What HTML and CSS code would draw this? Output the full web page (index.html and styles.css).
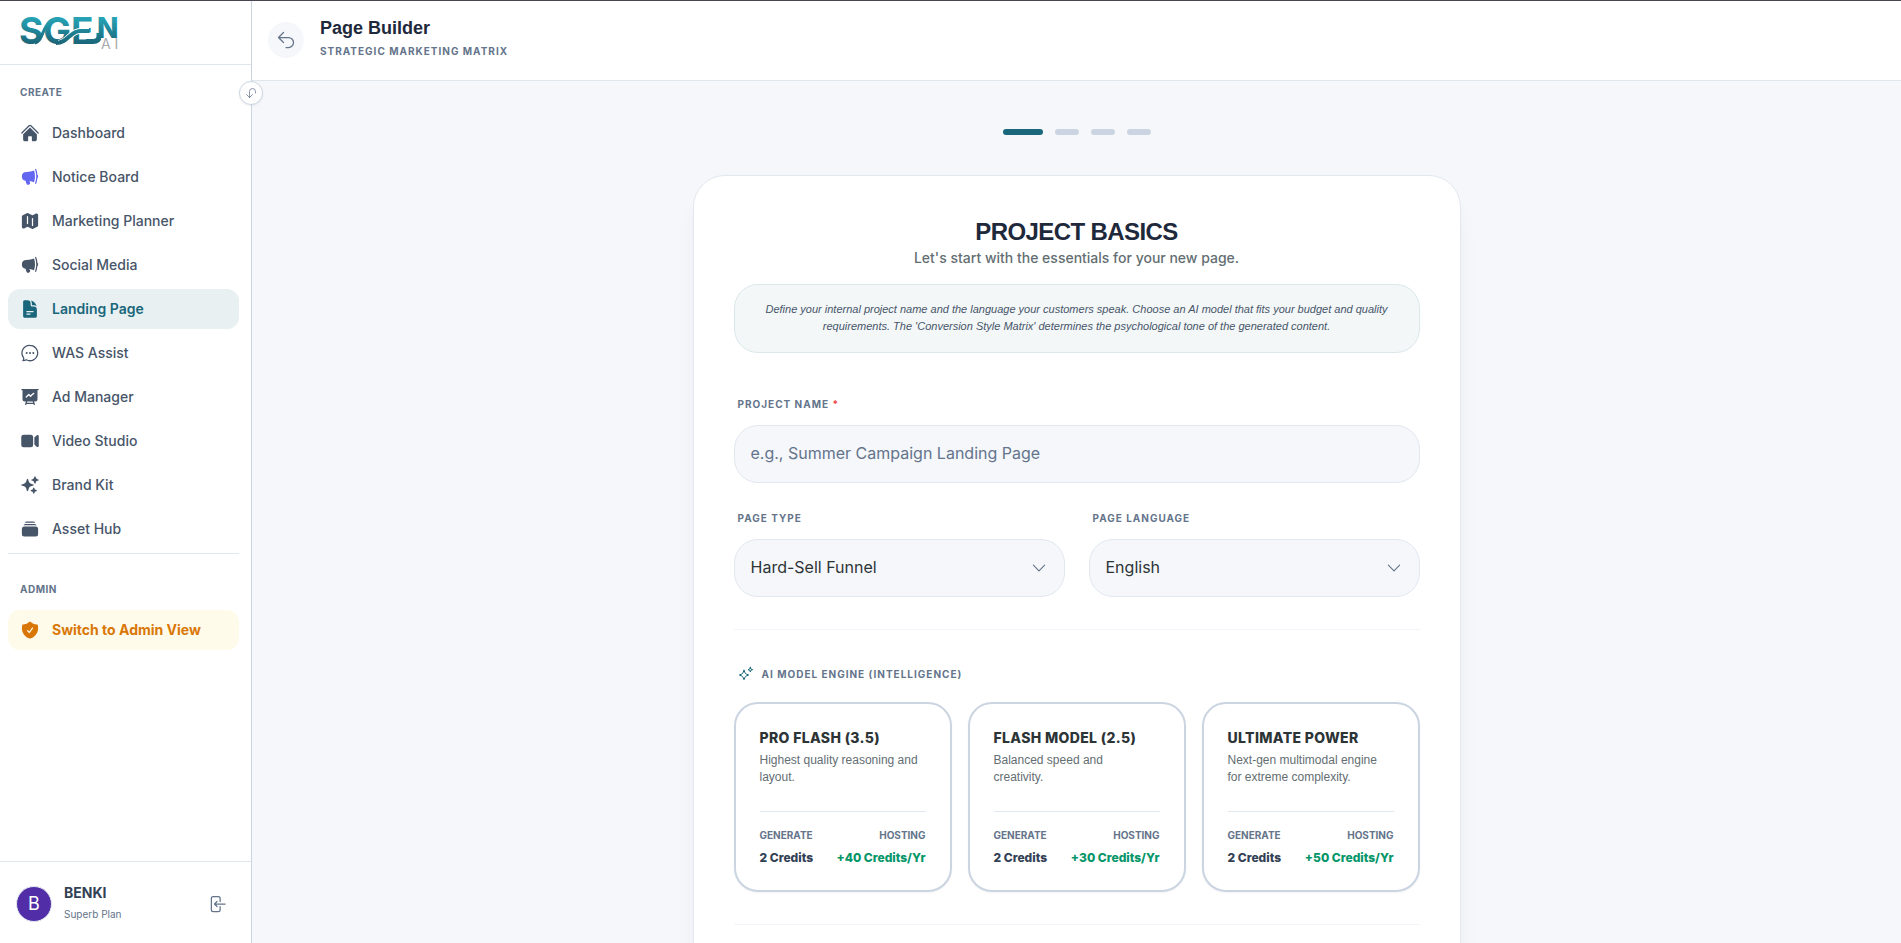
FILE: index.html
```html
<!DOCTYPE html>
<html lang="en">
<head>
<meta charset="utf-8">
<title>Page Builder</title>
<link rel="stylesheet" href="styles.css">
</head>
<body>
<div class="app">
  <aside class="sidebar">
    <a class="brand" href="#" aria-label="SGEN AI">
      <svg class="brand-logo" viewBox="0 0 104 34" aria-hidden="true">
        <defs>
          <linearGradient id="teal" gradientUnits="userSpaceOnUse" x1="0" y1="2" x2="0" y2="28">
            <stop offset="0" stop-color="#26a3b5"/>
            <stop offset="1" stop-color="#1b6478"/>
          </linearGradient>
        </defs>
        <text class="logo-main" x="-1" y="28" fill="url(#teal)">SGE<tspan class="logo-tail" x="77" y="22">N</tspan><tspan class="logo-sub" x="81" y="33">A I</tspan></text>
        <path d="M15 27C24 24 22 9 32 4" fill="none" stroke="url(#teal)" stroke-width="3"/>
        <path d="M38 27C48 27 50 15 60 14.900H69" fill="none" stroke="#fff" stroke-width="6"/>
        <path d="M36 27C48 27 50 15 60 14.900H69" fill="none" stroke="url(#teal)" stroke-width="4"/>
        <path d="M66 25.500H73Q79 25.500 79 20V17" fill="none" stroke="url(#teal)" stroke-width="5"/>
      </svg>
    </a>

    <nav class="nav">
      <h2 class="nav-title">CREATE</h2>
      <a class="nav-item" href="#"><svg class="icon" viewBox="0 0 24 24"><path d="M11.47 3.841a.75.75 0 0 1 1.06 0l8.69 8.69a.75.75 0 1 0 1.06-1.061l-8.689-8.69a2.25 2.25 0 0 0-3.182 0l-8.69 8.69a.75.75 0 1 0 1.061 1.06l8.69-8.689Z"/><path d="m12 5.432 8.159 8.159c.03.03.06.058.091.086v6.198c0 1.035-.84 1.875-1.875 1.875H15a.75.75 0 0 1-.75-.75v-4.5a.75.75 0 0 0-.75-.75h-3a.75.75 0 0 0-.75.75V21a.75.75 0 0 1-.75.75H5.625a1.875 1.875 0 0 1-1.875-1.875v-6.198a2.29 2.29 0 0 0 .091-.086L12 5.432Z"/></svg>Dashboard</a>
      <a class="nav-item nav-item-notice" href="#"><svg class="icon" viewBox="0 0 24 24"><path d="M16.881 4.345A23.112 23.112 0 0 1 8.25 6H7.5a5.25 5.25 0 0 0-.88 10.427 21.593 21.593 0 0 0 1.378 3.94c.464 1.004 1.674 1.32 2.582.796l.657-.379c.88-.508 1.165-1.593.772-2.468a17.116 17.116 0 0 1-.628-1.607c1.918.258 3.76.75 5.5 1.446A21.727 21.727 0 0 0 18 11.25c0-2.414-.393-4.735-1.119-6.905ZM18.26 3.74a23.22 23.22 0 0 1 1.24 7.51 23.22 23.22 0 0 1-1.41 7.992.75.75 0 1 0 1.409.516 24.555 24.555 0 0 0 1.415-6.43 2.992 2.992 0 0 0 .836-2.078c0-.807-.319-1.54-.836-2.078a24.65 24.65 0 0 0-1.415-6.43.75.75 0 1 0-1.409.516c.059.16.116.321.17.483Z"/></svg>Notice Board</a>
      <a class="nav-item" href="#"><svg class="icon" viewBox="0 0 24 24"><path fill-rule="evenodd" d="M8.161 2.58a1.875 1.875 0 0 1 1.678 0l4.993 2.498c.106.052.23.052.336 0l3.869-1.935A1.875 1.875 0 0 1 21.75 4.82v12.485c0 .71-.401 1.36-1.037 1.677l-4.875 2.437a1.875 1.875 0 0 1-1.676 0l-4.994-2.497a.375.375 0 0 0-.336 0l-3.868 1.935A1.875 1.875 0 0 1 2.25 19.18V6.695c0-.71.401-1.36 1.036-1.677l4.875-2.437ZM9 6a.75.75 0 0 1 .75.75V15a.75.75 0 0 1-1.5 0V6.75A.75.75 0 0 1 9 6Zm6.75 3a.75.75 0 0 0-1.5 0v8.25a.75.75 0 0 0 1.5 0V9Z"/></svg>Marketing Planner</a>
      <a class="nav-item" href="#"><svg class="icon" viewBox="0 0 24 24"><path d="M16.881 4.345A23.112 23.112 0 0 1 8.25 6H7.5a5.25 5.25 0 0 0-.88 10.427 21.593 21.593 0 0 0 1.378 3.94c.464 1.004 1.674 1.32 2.582.796l.657-.379c.88-.508 1.165-1.593.772-2.468a17.116 17.116 0 0 1-.628-1.607c1.918.258 3.76.75 5.5 1.446A21.727 21.727 0 0 0 18 11.25c0-2.414-.393-4.735-1.119-6.905ZM18.26 3.74a23.22 23.22 0 0 1 1.24 7.51 23.22 23.22 0 0 1-1.41 7.992.75.75 0 1 0 1.409.516 24.555 24.555 0 0 0 1.415-6.43 2.992 2.992 0 0 0 .836-2.078c0-.807-.319-1.54-.836-2.078a24.65 24.65 0 0 0-1.415-6.43.75.75 0 1 0-1.409.516c.059.16.116.321.17.483Z"/></svg>Social Media</a>
      <a class="nav-item nav-item-active" href="#" aria-current="page"><svg class="icon" viewBox="0 0 24 24"><path fill-rule="evenodd" d="M5.625 1.5c-1.036 0-1.875.84-1.875 1.875v17.25c0 1.035.84 1.875 1.875 1.875h12.75c1.035 0 1.875-.84 1.875-1.875V12.75A3.75 3.75 0 0 0 16.5 9h-1.875a1.875 1.875 0 0 1-1.875-1.875V5.25A3.75 3.75 0 0 0 9 1.5H5.625ZM7.5 15a.75.75 0 0 1 .75-.75h7.5a.75.75 0 0 1 0 1.5h-7.5A.75.75 0 0 1 7.5 15Zm.75 2.25a.75.75 0 0 0 0 1.5H12a.75.75 0 0 0 0-1.5H8.25Z"/><path d="M12.971 1.816A5.23 5.23 0 0 1 14.25 5.25v1.875c0 .207.168.375.375.375H16.5a5.23 5.23 0 0 1 3.434 1.279 9.768 9.768 0 0 0-6.963-6.963Z"/></svg>Landing Page</a>
      <a class="nav-item" href="#"><svg class="icon icon-line" viewBox="0 0 24 24"><path d="M12 2.75a9.25 9.25 0 1 1-4.4 17.4c-1 .7-2.600 1.100-4.100 1.100.8-.9 1.100-2 .9-3.500A9.250 9.250 0 0 1 12 2.750Z"/><g fill="currentColor" stroke="none"><circle cx="8" cy="12" r="1.200"/><circle cx="12" cy="12" r="1.200"/><circle cx="16" cy="12" r="1.200"/></g></svg>WAS Assist</a>
      <a class="nav-item" href="#"><svg class="icon" viewBox="0 0 24 24"><path fill-rule="evenodd" d="M2.250 2.250a.75.75 0 0 0 0 1.500H3v10.500a3 3 0 0 0 3 3h1.210l-1.172 3.513a.75.75 0 0 0 1.424.474l.329-.987h8.418l.33.987a.75.75 0 0 0 1.422-.474l-1.170-3.513H18a3 3 0 0 0 3-3V3.750h.75a.75.75 0 0 0 0-1.500H2.250Zm6.540 15h6.420l.5 1.500H8.290l.5-1.500Zm8.085-8.995a.75.75 0 1 0-.75-1.299 12.810 12.810 0 0 0-3.558 3.050L11.030 8.470a.75.75 0 0 0-1.060 0l-3 3a.75.75 0 1 0 1.060 1.060l2.470-2.470 1.617 1.618a.75.75 0 0 0 1.146-.102 11.312 11.312 0 0 1 3.612-3.321Z"/></svg>Ad Manager</a>
      <a class="nav-item" href="#"><svg class="icon" viewBox="0 0 24 24"><path d="M4.500 4.500a3 3 0 0 0-3 3v9a3 3 0 0 0 3 3h8.250a3 3 0 0 0 3-3v-9a3 3 0 0 0-3-3H4.500ZM19.940 18.750l-2.690-2.690V7.940l2.690-2.690c.944-.945 2.560-.276 2.560 1.060v11.380c0 1.336-1.616 2.005-2.560 1.060Z"/></svg>Video Studio</a>
      <a class="nav-item" href="#"><svg class="icon" viewBox="0 0 24 24"><path d="M9 4.500a.75.75 0 0 1 .721.544l.813 2.846a3.750 3.750 0 0 0 2.576 2.576l2.846.813a.75.75 0 0 1 0 1.442l-2.846.813a3.750 3.750 0 0 0-2.576 2.576l-.813 2.846a.75.75 0 0 1-1.442 0l-.813-2.846a3.750 3.750 0 0 0-2.576-2.576l-2.846-.813a.75.75 0 0 1 0-1.442l2.846-.813A3.750 3.750 0 0 0 7.466 7.890l.813-2.846A.75.75 0 0 1 9 4.500ZM18 1.500a.75.75 0 0 1 .728.568l.258 1.036c.236.94.97 1.674 1.910 1.910l1.036.258a.75.75 0 0 1 0 1.456l-1.036.258c-.94.236-1.674.97-1.910 1.910l-.258 1.036a.75.75 0 0 1-1.456 0l-.258-1.036a2.625 2.625 0 0 0-1.910-1.910l-1.036-.258a.75.75 0 0 1 0-1.456l1.036-.258a2.625 2.625 0 0 0 1.910-1.910l.258-1.036A.75.75 0 0 1 18 1.500ZM16.500 15a.75.75 0 0 1 .712.513l.394 1.183c.15.447.5.799.948.948l1.183.395a.75.75 0 0 1 0 1.422l-1.183.395c-.447.15-.799.5-.948.948l-.395 1.183a.75.75 0 0 1-1.422 0l-.395-1.183a1.500 1.500 0 0 0-.948-.948l-1.183-.395a.75.75 0 0 1 0-1.422l1.183-.395c.447-.15.799-.5.948-.948l.395-1.183A.75.75 0 0 1 16.500 15Z"/></svg>Brand Kit</a>
      <a class="nav-item" href="#"><svg class="icon" viewBox="0 0 24 24"><path d="M5.566 4.657A4.505 4.505 0 0 1 6.750 4.500h10.500c.41 0 .806.055 1.183.157A3 3 0 0 0 15.750 3h-7.500a3 3 0 0 0-2.684 1.657ZM2.250 12a3 3 0 0 1 3-3h13.500a3 3 0 0 1 3 3v6a3 3 0 0 1-3 3H5.250a3 3 0 0 1-3-3v-6ZM5.250 7.500c-.41 0-.806.055-1.184.157A3 3 0 0 1 6.750 6h10.500a3 3 0 0 1 2.683 1.657A4.505 4.505 0 0 0 18.750 7.500H5.250Z"/></svg>Asset Hub</a>
      <div class="nav-admin">
        <h2 class="nav-title">ADMIN</h2>
        <a class="nav-item nav-item-admin" href="#"><svg class="icon" viewBox="0 0 24 24"><path fill-rule="evenodd" d="M12.516 2.170a.75.75 0 0 0-1.032 0 11.209 11.209 0 0 1-7.877 3.080.75.75 0 0 0-.722.515A12.740 12.740 0 0 0 2.250 9.750c0 5.942 4.064 10.933 9.563 12.348a.749.749 0 0 0 .374 0c5.499-1.415 9.563-6.406 9.563-12.348 0-1.390-.223-2.730-.635-3.985a.75.75 0 0 0-.722-.516l-.143.001c-2.996 0-5.717-1.170-7.734-3.080Zm3.094 8.016a.75.75 0 1 0-1.220-.872l-3.236 4.530L9.530 12.220a.75.75 0 0 0-1.060 1.060l2.250 2.250a.75.75 0 0 0 1.140-.094l3.750-5.250Z"/></svg>Switch to Admin View</a>
      </div>
    </nav>

    <div class="account">
      <span class="avatar">B</span>
      <div class="account-text">
        <strong class="account-name">BENKI</strong>
        <span class="account-plan">Superb Plan</span>
      </div>
      <button class="logout" type="button" aria-label="Log out"><svg class="icon icon-line" viewBox="0 0 24 24"><path d="M15.750 9V5.250A2.250 2.250 0 0 0 13.500 3h-6a2.250 2.250 0 0 0-2.250 2.250v13.500A2.250 2.250 0 0 0 7.500 21h6a2.250 2.250 0 0 0 2.250-2.250V15M12 9l-3 3m0 0 3 3m-3-3h12.750"/></svg></button>
    </div>

    <button class="collapse" type="button" aria-label="Collapse sidebar"><svg class="icon-small icon-line" viewBox="0 0 24 24"><path d="m15 15-6 6m0 0-6-6m6 6V9a6 6 0 0 1 12 0v3"/></svg></button>
  </aside>

  <div class="page">
    <header class="topbar">
      <button class="back" type="button" aria-label="Back"><svg class="icon icon-line" viewBox="0 0 24 24"><path d="M9 15 3 9m0 0 6-6M3 9h12a6 6 0 0 1 0 12h-3"/></svg></button>
      <div class="topbar-text">
        <h1 class="topbar-title">Page Builder</h1>
        <p class="topbar-sub">STRATEGIC MARKETING MATRIX</p>
      </div>
    </header>

    <main class="content">
      <div class="steps">
        <span class="step step-current"></span><span class="step"></span><span class="step"></span><span class="step"></span>
      </div>

      <form class="card">
        <h2 class="card-title">PROJECT BASICS</h2>
        <p class="card-sub">Let's start with the essentials for your new page.</p>
        <p class="hint">Define your internal project name and the language your customers speak. Choose an AI model that fits your budget and quality requirements. The 'Conversion Style Matrix' determines the psychological tone of the generated content.</p>

        <div class="field">
          <label class="label" for="name">PROJECT NAME <span class="required">*</span></label>
          <input class="control" id="name" type="text" placeholder="e.g., Summer Campaign Landing Page">
        </div>

        <div class="field-row">
          <div class="field">
            <label class="label" for="type">PAGE TYPE</label>
            <div class="select">
              <select class="control" id="type"><option>Hard-Sell Funnel</option></select>
              <svg class="chevron icon-line" viewBox="0 0 24 24"><path d="m19.500 8.250-7.500 7.500-7.500-7.500"/></svg>
            </div>
          </div>
          <div class="field">
            <label class="label" for="lang">PAGE LANGUAGE</label>
            <div class="select">
              <select class="control" id="lang"><option>English</option></select>
              <svg class="chevron icon-line" viewBox="0 0 24 24"><path d="m19.500 8.250-7.500 7.500-7.500-7.500"/></svg>
            </div>
          </div>
        </div>

        <section class="engine">
          <h3 class="label engine-title"><svg class="spark icon-line" viewBox="0 0 24 24"><path d="M9 6.500l1.700 4.100a2 2 0 0 0 1.200 1.200L16 13.500l-4.100 1.700a2 2 0 0 0-1.200 1.200L9 20.500l-1.700-4.100a2 2 0 0 0-1.200-1.200L2 13.500l4.100-1.700a2 2 0 0 0 1.200-1.200L9 6.500Z"/><path d="M18.500 2l.9 2.600 2.600.9-2.600.9-.9 2.600-.9-2.600L15 5.500l2.600-.9.9-2.600Z"/></svg>AI MODEL ENGINE (INTELLIGENCE)</h3>
          <div class="models">
            <button class="model" type="button">
              <span class="model-name">PRO FLASH (3.5)</span>
              <span class="model-desc">Highest quality reasoning and layout.</span>
              <span class="model-costs">
                <span class="cost"><span class="cost-label">GENERATE</span><span class="cost-value">2 Credits</span></span>
                <span class="cost cost-end"><span class="cost-label">HOSTING</span><span class="cost-value cost-green">+40 Credits/Yr</span></span>
              </span>
            </button>
            <button class="model" type="button">
              <span class="model-name">FLASH MODEL (2.5)</span>
              <span class="model-desc">Balanced speed and creativity.</span>
              <span class="model-costs">
                <span class="cost"><span class="cost-label">GENERATE</span><span class="cost-value">2 Credits</span></span>
                <span class="cost cost-end"><span class="cost-label">HOSTING</span><span class="cost-value cost-green">+30 Credits/Yr</span></span>
              </span>
            </button>
            <button class="model" type="button">
              <span class="model-name">ULTIMATE POWER</span>
              <span class="model-desc">Next-gen multimodal engine for extreme complexity.</span>
              <span class="model-costs">
                <span class="cost"><span class="cost-label">GENERATE</span><span class="cost-value">2 Credits</span></span>
                <span class="cost cost-end"><span class="cost-label">HOSTING</span><span class="cost-value cost-green">+50 Credits/Yr</span></span>
              </span>
            </button>
          </div>
        </section>
        <div class="section-end"></div>
      </form>
    </main>
  </div>
</div>
</body>
</html>
```
FILE: styles.css
```css
*, *::before, *::after { box-sizing: border-box; }
body {
  margin: 0;
  font-family: Inter, "Liberation Sans", sans-serif;
  font-size: 14px;
  line-height: 20px;
  color: #2d3436;
  background: #f5f7fb;
}
h1, h2, h3, p { margin: 0; }
a { color: inherit; text-decoration: none; }
button, input, select { font: inherit; color: inherit; }
button { border: 0; padding: 0; background: none; cursor: pointer; }

.app {
  display: flex;
  height: 100vh;
  overflow: hidden;
  border-top: 1px solid #4a4453;
}

.icon { width: 20px; height: 20px; flex: none; fill: currentColor; }
.icon-small { width: 12px; height: 12px; }
.icon-line {
  fill: none;
  stroke: currentColor;
  stroke-width: 1.5;
  stroke-linecap: round;
  stroke-linejoin: round;
}

/* Sidebar */
.sidebar {
  position: relative;
  display: flex;
  flex-direction: column;
  flex: none;
  width: 252px;
  background: #fff;
  border-right: 1px solid #cbd5e1;
}
.brand {
  display: flex;
  align-items: center;
  height: 64px;
  padding: 0 20px;
  border-bottom: 1px solid #dfe6ee;
}
.brand-logo { width: 104px; height: 34px; overflow: visible; }
.logo-main { font-size: 37px; font-weight: 700; }
.logo-tail { font-size: 28px; font-weight: 800; }
.logo-sub { font-size: 14px; font-weight: 400; fill: #a9abad; }
.nav {
  display: flex;
  flex-direction: column;
  gap: 4px;
  flex: 1;
  padding: 20px 12px 0 8px;
}
.nav-title {
  padding: 0 12px 9px;
  font-size: 10px;
  line-height: 15px;
  font-weight: 700;
  letter-spacing: 0.5px;
  color: #64748b;
}
.nav-item {
  display: flex;
  align-items: center;
  gap: 12px;
  height: 40px;
  padding: 0 12px;
  border-radius: 12px;
  font-weight: 500;
  color: #475569;
}
.nav-item-notice .icon { color: #6366f1; }
.nav-item-active { background: #e8f0f2; color: #1a677b; font-weight: 600; }
.nav-item-admin { background: #fffbeb; color: #d97706; font-weight: 700; }
.nav-admin { border-top: 1px solid #e2e8f0; padding-top: 28px; }
.nav-admin .nav-title { padding-bottom: 13px; }
.account {
  display: flex;
  align-items: center;
  gap: 12px;
  height: 82px;
  padding: 2px 24px 0 16px;
  border-top: 1px solid #dfe6ee;
}
.avatar {
  display: flex;
  align-items: center;
  justify-content: center;
  width: 36px;
  height: 36px;
  border: 1px solid #e2e8f0;
  border-radius: 50%;
  background: #512da8;
  color: #fff;
  font-size: 18px;
}
.account-text { display: flex; flex-direction: column; flex: 1; padding-bottom: 2px; }
.account-name { line-height: 22px; color: #334155; }
.account-plan { font-size: 10px; line-height: 20px; color: #64748b; }
.logout { display: flex; color: #64748b; }
.collapse {
  position: absolute;
  top: 80px;
  right: -12px;
  z-index: 1;
  display: flex;
  align-items: center;
  justify-content: center;
  width: 24px;
  height: 24px;
  border: 1px solid #cbd5e1;
  border-radius: 50%;
  background: #fff;
  color: #64748b;
  box-shadow: 0 1px 2px rgba(15, 23, 42, 0.06);
}

/* Page */
.page { display: flex; flex-direction: column; flex: 1; min-width: 0; }
.topbar {
  display: flex;
  align-items: center;
  gap: 16px;
  flex: none;
  height: 80px;
  padding: 0 16px 2px;
  background: #fff;
  border-bottom: 1px solid #dfe6ee;
}
.back {
  display: flex;
  align-items: center;
  justify-content: center;
  width: 36px;
  height: 36px;
  border-radius: 50%;
  background: #f5f7fb;
  color: #64748b;
}
.topbar-text { padding-bottom: 7px; }
.topbar-title {
  font-family: "Liberation Sans", sans-serif;
  font-size: 18px;
  line-height: 28px;
  font-weight: 700;
  color: #1e293b;
}
.topbar-sub {
  padding-top: 2px;
  font-size: 10px;
  line-height: 15px;
  font-weight: 700;
  letter-spacing: 1px;
  color: #64748b;
}
.content { flex: 1; min-height: 0; overflow: hidden; padding: 48px 24px; }
.steps { display: flex; justify-content: center; gap: 12px; margin-bottom: 40px; }
.step { width: 24px; height: 6px; border-radius: 3px; background: #cbd5e1; }
.step-current { width: 40px; background: #1a677b; }

.card {
  max-width: 768px;
  margin: 0 auto;
  padding: 40px;
  background: #fff;
  border: 1px solid #e2e8f0;
  border-radius: 32px;
  box-shadow: 0 20px 25px -5px rgba(15, 23, 42, 0.06), 0 8px 10px -6px rgba(15, 23, 42, 0.06);
}
.card-title {
  font-family: "Liberation Sans", sans-serif;
  font-size: 24px;
  line-height: 32px;
  font-weight: 700;
  letter-spacing: -0.025em;
  text-align: center;
  color: #1e293b;
}
.card-sub { text-align: center; font-weight: 500; color: #636e72; }
.hint {
  margin: 16px 0 44px;
  padding: 16px 20px 17px;
  border: 1px solid #dbe8ea;
  border-radius: 24px;
  background: #f3f7f8;
  font-family: "Liberation Sans", sans-serif;
  font-size: 11px;
  line-height: 17px;
  font-style: italic;
  text-align: center;
  color: #475569;
}
.field { display: flex; flex-direction: column; gap: 13px; }
.field-row { display: grid; grid-template-columns: 1fr 1fr; gap: 24px; margin-top: 28px; }
.label {
  padding-left: 4px;
  font-size: 10px;
  line-height: 15px;
  font-weight: 700;
  letter-spacing: 1px;
  color: #64748b;
}
.required { color: #ef4444; }
.control {
  width: 100%;
  height: 58px;
  padding: 0 16px 2px;
  border: 1px solid #e2e8f0;
  border-radius: 24px;
  background: #f5f7fb;
  font-size: 16px;
  appearance: none;
}
.control::placeholder { color: #64748b; opacity: 1; }
.select { display: grid; align-items: center; }
.select > * { grid-area: 1 / 1; }
.chevron { width: 18px; height: 18px; margin-right: 17px; justify-self: end; color: #64748b; pointer-events: none; }

.engine { margin-top: 32px; padding-top: 36px; border-top: 1px solid #f1f5f9; }
.engine-title { display: flex; align-items: center; gap: 8px; margin-bottom: 20px; }
.spark { width: 16px; height: 16px; color: #1a677b; }
.models { display: grid; grid-template-columns: repeat(3, 1fr); gap: 16px; }
.model {
  display: flex;
  flex-direction: column;
  padding: 24px;
  border: 2px solid #cbd5e1;
  border-radius: 24px;
  background: #fff;
  text-align: left;
  box-shadow: 0 1px 2px rgba(15, 23, 42, 0.05);
}
.model-name { font-weight: 800; letter-spacing: 0.025em; }
.model-desc {
  min-height: 34px;
  margin: 4px 0 25px;
  padding-right: 5px;
  font-family: "Liberation Sans", sans-serif;
  font-size: 12px;
  line-height: 17px;
  color: #636e72;
}
.model-costs {
  display: flex;
  justify-content: space-between;
  padding-top: 16px;
  border-top: 1px solid #e2e8f0;
}
.cost { display: flex; flex-direction: column; gap: 7px; }
.cost-end { align-items: flex-end; }
.cost-label { font-size: 10px; line-height: 15px; font-weight: 700; color: #64748b; }
.cost-value { font-size: 12px; line-height: 16px; font-weight: 800; color: #334155; }
.cost-green { color: #059669; }
.section-end { margin-top: 32px; border-top: 1px solid #f1f5f9; min-height: 80px; }
```
